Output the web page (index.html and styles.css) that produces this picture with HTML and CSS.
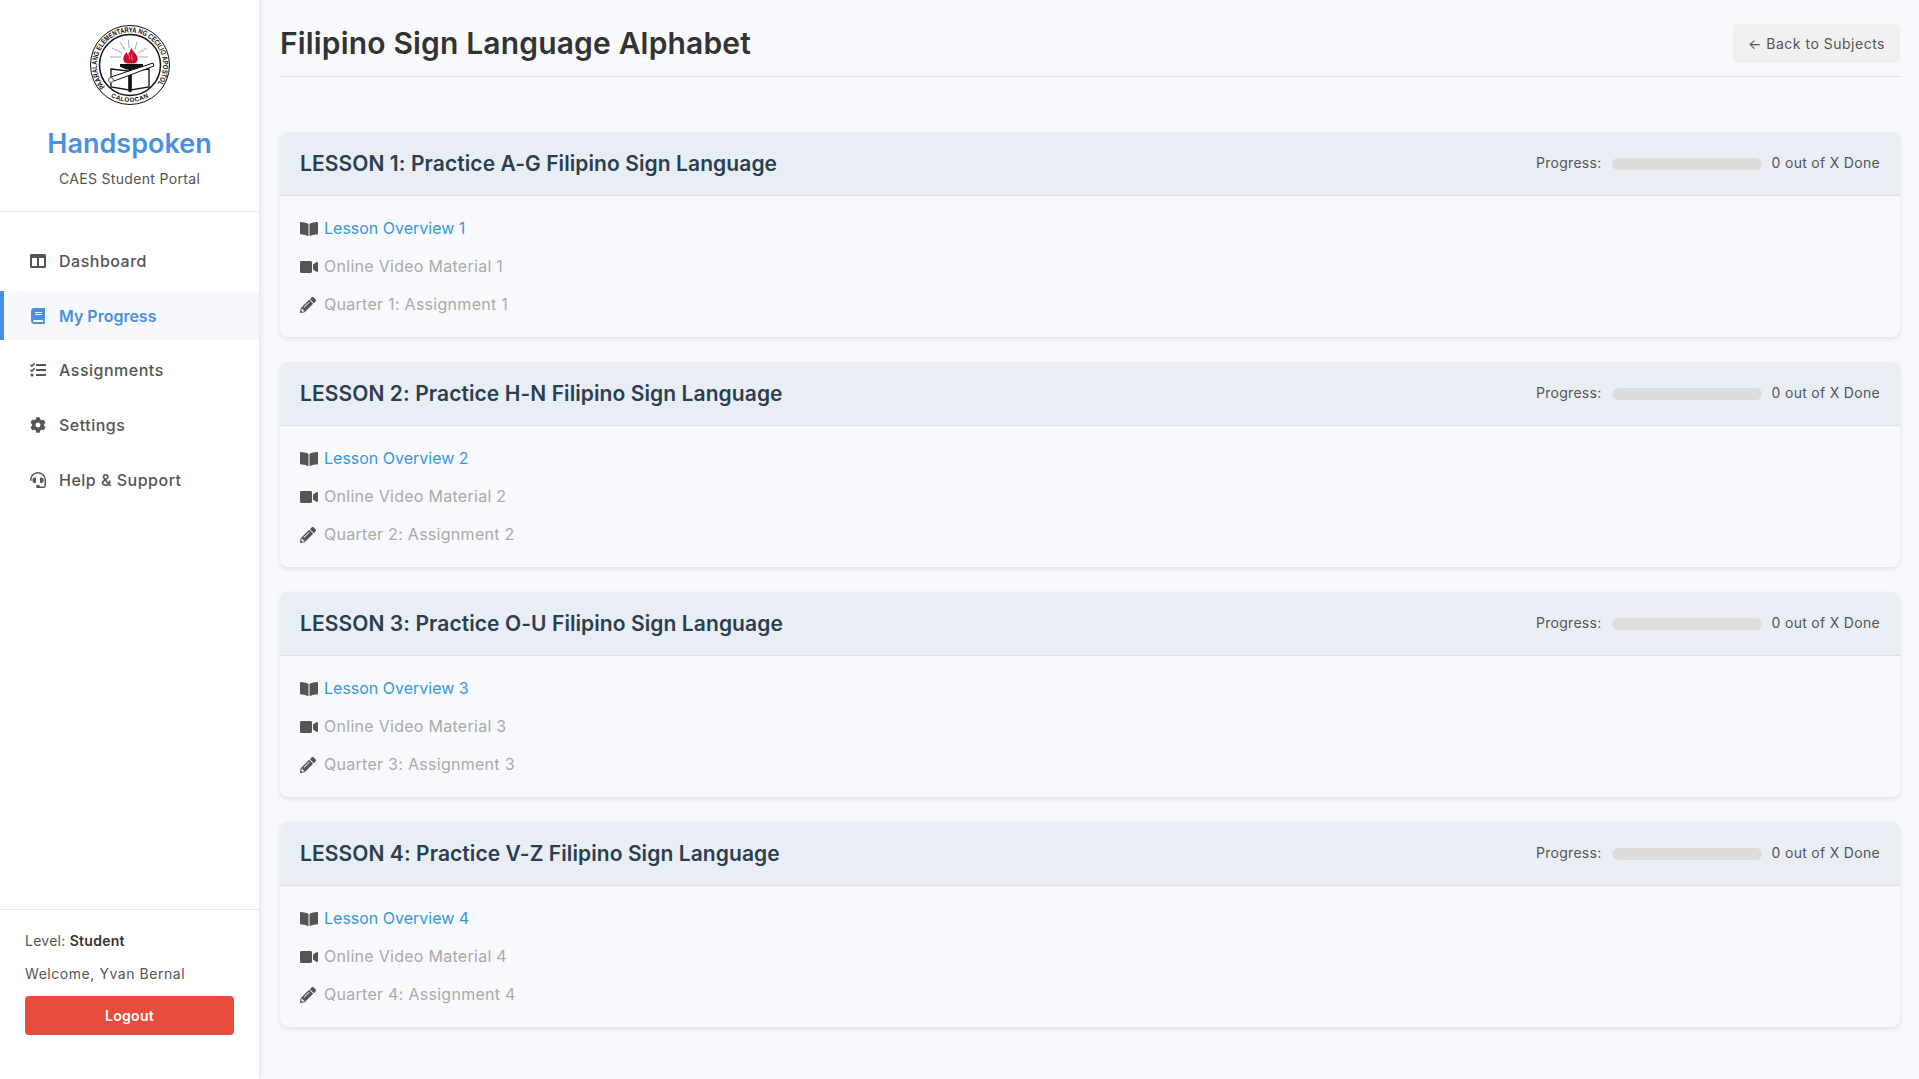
FILE: index.html
```html
<!DOCTYPE html>
<html lang="en">
<head>
  <meta charset="UTF-8">
  <meta name="viewport" content="width=device-width, initial-scale=1.0">
  <title>Filipino Sign Language Alphabet</title>
  <link rel="stylesheet" href="styles.css">
</head>
<body>
  <svg class="sprite" xmlns="http://www.w3.org/2000/svg">
    <symbol id="i-columns" viewBox="0 0 512 512"><path d="M464 32H48C21.49 32 0 53.49 0 80v352c0 26.51 21.49 48 48 48h416c26.51 0 48-21.49 48-48V80c0-26.51-21.49-48-48-48zM224 416H64V160h160v256zm224 0H288V160h160v256z"/></symbol>
    <symbol id="i-book" viewBox="0 0 448 512"><path d="M448 360V24c0-13.3-10.7-24-24-24H96C43 0 0 43 0 96v320c0 53 43 96 96 96h328c13.3 0 24-10.7 24-24v-16c0-7.5-3.5-14.3-8.9-18.7-4.2-15.4-4.2-59.3 0-74.7 5.4-4.3 8.9-11.1 8.9-18.6zM128 134c0-3.3 2.7-6 6-6h212c3.3 0 6 2.7 6 6v20c0 3.3-2.7 6-6 6H134c-3.3 0-6-2.7-6-6v-20zm0 64c0-3.3 2.7-6 6-6h212c3.3 0 6 2.7 6 6v20c0 3.3-2.7 6-6 6H134c-3.3 0-6-2.7-6-6v-20zm253.4 250H96c-17.7 0-32-14.3-32-32 0-17.6 14.4-32 32-32h285.4c-1.9 17.1-1.9 46.9 0 64z"/></symbol>
    <symbol id="i-tasks" viewBox="0 0 512 512"><path d="M139.61 35.5a12 12 0 0 0-17 0L58.93 98.81l-22.7-22.12a12 12 0 0 0-17 0L3.53 92.41a12 12 0 0 0 0 17l47.59 47.4a12.78 12.78 0 0 0 17.61 0l15.59-15.62L156.52 69a12.09 12.09 0 0 0 .09-17zm0 159.19a12 12 0 0 0-17 0l-63.68 63.72-22.7-22.1a12 12 0 0 0-17 0L3.53 252a12 12 0 0 0 0 17L51 316.5a12.77 12.77 0 0 0 17.6 0l15.7-15.69 72.2-72.22a12 12 0 0 0 .09-16.9zM64 368c-26.49 0-48.59 21.5-48.59 48S37.53 464 64 464a48 48 0 0 0 0-96zm432 16H208a16 16 0 0 0-16 16v32a16 16 0 0 0 16 16h288a16 16 0 0 0 16-16v-32a16 16 0 0 0-16-16zm0-320H208a16 16 0 0 0-16 16v32a16 16 0 0 0 16 16h288a16 16 0 0 0 16-16V80a16 16 0 0 0-16-16zm0 160H208a16 16 0 0 0-16 16v32a16 16 0 0 0 16 16h288a16 16 0 0 0 16-16v-32a16 16 0 0 0-16-16z"/></symbol>
    <symbol id="i-cog" viewBox="0 0 512 512"><path d="M487.4 315.7l-42.6-24.6c4.3-23.2 4.3-47 0-70.2l42.6-24.6c4.9-2.8 7.1-8.6 5.5-14-11.1-35.6-30-67.8-54.7-94.6-3.8-4.1-10-5.1-14.8-2.3L380.8 110c-17.9-15.4-38.5-27.3-60.8-35.1V25.8c0-5.6-3.9-10.5-9.4-11.7-36.7-8.2-74.3-7.8-109.2 0-5.5 1.2-9.4 6.1-9.4 11.7V75c-22.2 7.9-42.8 19.8-60.8 35.1L88.7 85.5c-4.9-2.8-11-1.9-14.8 2.3-24.7 26.7-43.6 58.9-54.7 94.6-1.7 5.4.6 11.2 5.5 14L67.3 221c-4.3 23.2-4.3 47 0 70.2l-42.6 24.6c-4.9 2.8-7.1 8.6-5.5 14 11.1 35.6 30 67.8 54.7 94.6 3.8 4.1 10 5.1 14.8 2.3l42.6-24.6c17.9 15.4 38.5 27.3 60.8 35.1v49.2c0 5.6 3.9 10.5 9.4 11.7 36.7 8.2 74.3 7.8 109.2 0 5.5-1.2 9.4-6.1 9.4-11.7v-49.2c22.2-7.9 42.8-19.8 60.8-35.1l42.6 24.6c4.9 2.8 11 1.9 14.8-2.3 24.7-26.7 43.6-58.9 54.7-94.6 1.5-5.5-.7-11.3-5.6-14.1zM256 336c-44.1 0-80-35.9-80-80s35.9-80 80-80 80 35.9 80 80-35.9 80-80 80z"/></symbol>
    <symbol id="i-headset" viewBox="0 0 512 512"><path d="M192 208c0-17.67-14.33-32-32-32h-16c-35.35 0-64 28.65-64 64v48c0 35.35 28.65 64 64 64h16c17.67 0 32-14.33 32-32V208zm176 144c35.35 0 64-28.65 64-64v-48c0-35.35-28.65-64-64-64h-16c-17.67 0-32 14.33-32 32v112c0 17.67 14.33 32 32 32h16zM256 0C113.18 0 4.58 118.83 0 256v16c0 8.84 7.16 16 16 16h16c8.84 0 16-7.16 16-16v-16c0-114.69 93.31-208 208-208s208 93.31 208 208h-.12c.08 2.43.12 165.72.12 165.72 0 23.35-18.93 42.28-42.28 42.28H320c0-26.51-21.49-48-48-48h-32c-26.51 0-48 21.49-48 48s21.49 48 48 48h181.72c49.86 0 90.28-40.42 90.28-90.28V256C507.42 118.83 398.82 0 256 0z"/></symbol>
    <symbol id="i-open" viewBox="0 0 576 512"><path d="M542.22 32.05c-54.8 3.11-163.72 14.43-230.96 55.59-4.64 2.84-7.27 7.89-7.27 13.17v363.87c0 11.55 12.63 18.85 23.28 13.49 69.18-34.82 169.23-44.32 218.7-46.92 16.89-.89 30.02-14.43 30.02-30.66V62.75c.01-17.71-15.35-31.74-33.77-30.7zM264.73 87.64C197.5 46.48 88.58 35.17 33.78 32.05 15.36 31.01 0 45.04 0 62.75V400.6c0 16.24 13.13 29.78 30.02 30.66 49.49 2.6 149.59 12.11 218.77 46.95 10.62 5.35 23.21-1.94 23.21-13.46V100.63c0-5.29-2.62-10.14-7.27-12.99z"/></symbol>
    <symbol id="i-video" viewBox="0 0 576 512"><path d="M336.2 64H47.8C21.4 64 0 85.4 0 111.8v288.4C0 426.6 21.4 448 47.8 448h288.4c26.4 0 47.8-21.4 47.8-47.8V111.8c0-26.4-21.4-47.8-47.8-47.8zm189.4 37.7L416 177.3v157.4l109.6 75.5c21.2 14.6 50.4-.3 50.4-25.8V127.5c0-25.4-29.1-40.4-50.4-25.8z"/></symbol>
    <symbol id="i-pencil" viewBox="0 0 512 512" preserveAspectRatio="xMinYMid meet"><path d="M497.9 142.1l-46.1 46.1c-4.7 4.7-12.3 4.7-17 0l-111-111c-4.7-4.7-4.7-12.3 0-17l46.1-46.1c18.7-18.7 49.1-18.7 67.9 0l60.1 60.1c18.8 18.7 18.8 49.1 0 67.9zM284.2 99.8L21.6 362.4.4 483.9c-2.9 16.4 11.4 30.6 27.8 27.8l121.5-21.3 262.6-262.6c4.7-4.7 4.7-12.3 0-17l-111-111c-4.8-4.7-12.4-4.7-17.1 0zM124.1 339.9c-5.5-5.5-5.5-14.3 0-19.8l154-154c5.5-5.5 14.3-5.5 19.8 0s5.5 14.3 0 19.8l-154 154c-5.5 5.5-14.3 5.5-19.8 0zM88 424h48v36.3l-64.5 11.3-31.1-31.1L51.7 376H88v48z"/></symbol>
  </svg>

  <div class="layout">
    <aside class="sidebar">
      <div class="brand">
        <svg class="logo" viewBox="0 0 80 80" xmlns="http://www.w3.org/2000/svg">
          <defs>
            <path id="arcTop" d="M15 62 A33 33 0 1 1 65 62"/>
            <path id="arcBottom" d="M18.800 70.300 A37 37 0 0 0 61.200 70.300"/>
          </defs>
          <circle cx="40" cy="40" r="39.500" fill="none" stroke="#111" stroke-width="1"/>
          <circle cx="40" cy="40" r="30.500" fill="none" stroke="#111" stroke-width="1.500"/>
          <text class="logo-text"><textPath href="#arcTop" textLength="146" lengthAdjust="spacingAndGlyphs">PAARALANG ELEMENTARYA NG CECILIO APOSTOL</textPath></text>
          <text class="logo-text logo-text-b"><textPath href="#arcBottom" startOffset="50%">CALOOCAN</textPath></text>
          <path d="M22 23l10 5M30 17l5 8M38.500 15l.5 8M47 17l-2 7M57 23l-9 5M20 32h11M58 32h-9" stroke="#a08a9c" stroke-width="0.800" fill="none"/>
          <path d="M41 22c.5 3 5 6 6.500 10 1 3-1 6.500-4 6.500h-6c-3 0-5-3-4-6.500 .5-2 2-3 3-5 .5 1.500 1 2 1.500 2.500 1-2 3-4 3-7.500z" fill="#c8102e"/>
          <path d="M39 27c-2 3 2 4 0 7M42 29c-2 2 1 3 0 6" fill="none" stroke="#f0a8b8" stroke-width="0.700"/>
          <path d="M30 39h23v2.500l-8 3H36l-6-3z" fill="#111"/>
          <path d="M21 44l18 2v19l-18-3zM59 44l-18 2v19l18-3z" fill="#fff" stroke="#111" stroke-width="1.300"/>
          <path d="M38.500 44h3v23h-3z" fill="#111"/>
          <path d="M21 52l42-14 1 3-40 15z" fill="#fff" stroke="#111" stroke-width="1"/>
          <circle cx="21" cy="55" r="2.500" fill="#fff" stroke="#555" stroke-width="1"/>
        </svg>
        <h2 class="brand-name">Handspoken</h2>
        <p class="brand-sub">CAES Student Portal</p>
      </div>

      <nav class="nav">
        <a class="nav-item" href="#"><svg class="nav-icon"><use href="#i-columns"/></svg>Dashboard</a>
        <a class="nav-item active" href="#"><svg class="nav-icon"><use href="#i-book"/></svg>My Progress</a>
        <a class="nav-item" href="#"><svg class="nav-icon"><use href="#i-tasks"/></svg>Assignments</a>
        <a class="nav-item" href="#"><svg class="nav-icon"><use href="#i-cog"/></svg>Settings</a>
        <a class="nav-item" href="#"><svg class="nav-icon"><use href="#i-headset"/></svg>Help &amp; Support</a>
      </nav>

      <div class="side-foot">
        <p class="level">Level: <strong>Student</strong></p>
        <p class="welcome">Welcome, Yvan Bernal</p>
        <button class="logout" type="button">Logout</button>
      </div>
    </aside>

    <main class="main">
      <header class="page-head">
        <h1>Filipino Sign Language Alphabet</h1>
        <a class="back" href="#">&larr; Back to Subjects</a>
      </header>

      <section class="card">
        <div class="card-head">
          <h3>LESSON 1: Practice A-G Filipino Sign Language</h3>
          <div class="progress"><span>Progress:</span><div class="bar"></div><span>0 out of X Done</span></div>
        </div>
        <ul class="items">
          <li><svg class="item-icon"><use href="#i-open"/></svg><a href="#">Lesson Overview 1</a></li>
          <li><svg class="item-icon"><use href="#i-video"/></svg><span class="locked">Online Video Material 1</span></li>
          <li><svg class="item-icon"><use href="#i-pencil"/></svg><span class="locked">Quarter 1: Assignment 1</span></li>
        </ul>
      </section>

      <section class="card">
        <div class="card-head">
          <h3>LESSON 2: Practice H-N Filipino Sign Language</h3>
          <div class="progress"><span>Progress:</span><div class="bar"></div><span>0 out of X Done</span></div>
        </div>
        <ul class="items">
          <li><svg class="item-icon"><use href="#i-open"/></svg><a href="#">Lesson Overview 2</a></li>
          <li><svg class="item-icon"><use href="#i-video"/></svg><span class="locked">Online Video Material 2</span></li>
          <li><svg class="item-icon"><use href="#i-pencil"/></svg><span class="locked">Quarter 2: Assignment 2</span></li>
        </ul>
      </section>

      <section class="card">
        <div class="card-head">
          <h3>LESSON 3: Practice O-U Filipino Sign Language</h3>
          <div class="progress"><span>Progress:</span><div class="bar"></div><span>0 out of X Done</span></div>
        </div>
        <ul class="items">
          <li><svg class="item-icon"><use href="#i-open"/></svg><a href="#">Lesson Overview 3</a></li>
          <li><svg class="item-icon"><use href="#i-video"/></svg><span class="locked">Online Video Material 3</span></li>
          <li><svg class="item-icon"><use href="#i-pencil"/></svg><span class="locked">Quarter 3: Assignment 3</span></li>
        </ul>
      </section>

      <section class="card">
        <div class="card-head">
          <h3>LESSON 4: Practice V-Z Filipino Sign Language</h3>
          <div class="progress"><span>Progress:</span><div class="bar"></div><span>0 out of X Done</span></div>
        </div>
        <ul class="items">
          <li><svg class="item-icon"><use href="#i-open"/></svg><a href="#">Lesson Overview 4</a></li>
          <li><svg class="item-icon"><use href="#i-video"/></svg><span class="locked">Online Video Material 4</span></li>
          <li><svg class="item-icon"><use href="#i-pencil"/></svg><span class="locked">Quarter 4: Assignment 4</span></li>
        </ul>
      </section>
    </main>
  </div>
</body>
</html>
```

FILE: styles.css
```css
* {
  margin: 0;
  padding: 0;
  box-sizing: border-box;
}

body {
  background-color: #f8f9fc;
  color: #333;
  font-family: Inter, "Open Sans", sans-serif;
  height: 100vh;
  overflow: hidden;
}

a {
  text-decoration: none;
}

.sprite {
  display: none;
}

.layout {
  display: flex;
  height: 100vh;
}

/* Sidebar */
.sidebar {
  width: 259px;
  flex-shrink: 0;
  background-color: #fff;
  box-shadow: 2px 0 6px rgba(0, 0, 0, 0.08);
  display: flex;
  flex-direction: column;
}

.brand {
  height: 212px;
  padding-top: 25px;
  border-bottom: 1px solid #e6e6e6;
  text-align: center;
}

.logo {
  display: block;
  width: 80px;
  height: 80px;
  margin: 0 auto;
}

.logo-text {
  font-family: "Liberation Sans", sans-serif;
  font-size: 7.5px;
  font-weight: 700;
  fill: #111;
}

.logo-text-b {
  font-size: 6.2px;
  letter-spacing: 0.5px;
  text-anchor: middle;
}

.brand-name {
  margin-top: 21px;
  font-size: 27px;
  line-height: 36px;
  font-weight: 600;
  color: #4a90e2;
}

.brand-sub {
  margin-top: 7px;
  font-size: 14px;
  line-height: 20px;
  color: #555;
  letter-spacing: 0.33px;
}

.nav {
  padding-top: 24.5px;
  display: flex;
  flex-direction: column;
  gap: 6px;
  flex: 1;
}

.nav-item {
  height: 48.7px;
  padding-left: 30px;
  display: flex;
  align-items: center;
  gap: 13px;
  font-size: 16px;
  font-weight: 500;
  color: #555;
  border-left: 4px solid transparent;
  letter-spacing: 0.5px;
}

.nav-item .nav-icon {
  margin-left: -4px;
}

.nav-item.active {
  color: #4a90e2;
  font-weight: 600;
  letter-spacing: 0;
  background-color: #f6f8fc;
  border-left-color: #4a90e2;
}

.nav-icon {
  width: 16px;
  height: 16px;
  fill: currentColor;
}

.side-foot {
  height: 170px;
  padding: 21px 25px 0;
  border-top: 1px solid #e6e6e6;
}

.level {
  font-size: 14px;
  line-height: 20px;
  color: #555;
  letter-spacing: 0.26px;
}

.level strong {
  color: #333;
  font-weight: 600;
}

.welcome {
  margin-top: 13px;
  font-size: 14px;
  line-height: 20px;
  color: #555;
  letter-spacing: 0.55px;
}

.logout {
  display: block;
  width: 209px;
  height: 39px;
  margin-top: 12px;
  padding-bottom: 1px;
  border: none;
  border-radius: 4px;
  background-color: #e74c3c;
  color: #fff;
  font-family: inherit;
  font-size: 14px;
  font-weight: 600;
  letter-spacing: 0.3px;
}

/* Main content */
.main {
  flex: 1;
  padding: 0 19px 0 21px;
}

.page-head {
  height: 77px;
  padding-top: 24px;
  margin-bottom: 55px;
  border-bottom: 1px solid #e0e0e0;
  display: flex;
  justify-content: space-between;
  align-items: flex-start;
}

.page-head h1 {
  font-size: 30px;
  line-height: 38px;
  font-weight: 600;
  color: #333;
  letter-spacing: 0.16px;
}

.back {
  height: 39px;
  width: 167px;
  padding-bottom: 1px;
  display: flex;
  align-items: center;
  justify-content: center;
  border-radius: 5px;
  background-color: #f0f0f0;
  color: #555;
  font-size: 14px;
  letter-spacing: 0.5px;
}

.card {
  height: 205px;
  margin-bottom: 25px;
  border-radius: 8px;
  background-color: #f8f9fc;
  box-shadow: 0 2px 5px rgba(0, 0, 0, 0.1);
  overflow: hidden;
}

.card-head {
  height: 64px;
  padding: 0 20px;
  background-color: #e9eef5;
  border-bottom: 1px solid #dcdfe6;
  display: flex;
  justify-content: space-between;
  align-items: center;
}

.card-head h3 {
  font-size: 21px;
  font-weight: 600;
  color: #2c3e50;
  letter-spacing: 0.08px;
}

.progress {
  display: flex;
  align-items: center;
  gap: 10px;
  font-size: 14px;
  color: #555;
  letter-spacing: 0.3px;
}

.progress span {
  padding-bottom: 2px;
}

.bar {
  width: 150px;
  height: 12px;
  border-radius: 6px;
  background-color: #ddd;
}

.items {
  list-style: none;
  padding: 13px 20px 0;
}

.items li {
  height: 38px;
  display: flex;
  align-items: center;
  font-size: 16px;
}

.item-icon {
  width: 18px;
  height: 16px;
  margin-top: 2px;
  margin-right: 6px;
  fill: #555;
}

.items a {
  color: #3498db;
}

.locked {
  color: #aaa;
  letter-spacing: 0.28px;
}
```
